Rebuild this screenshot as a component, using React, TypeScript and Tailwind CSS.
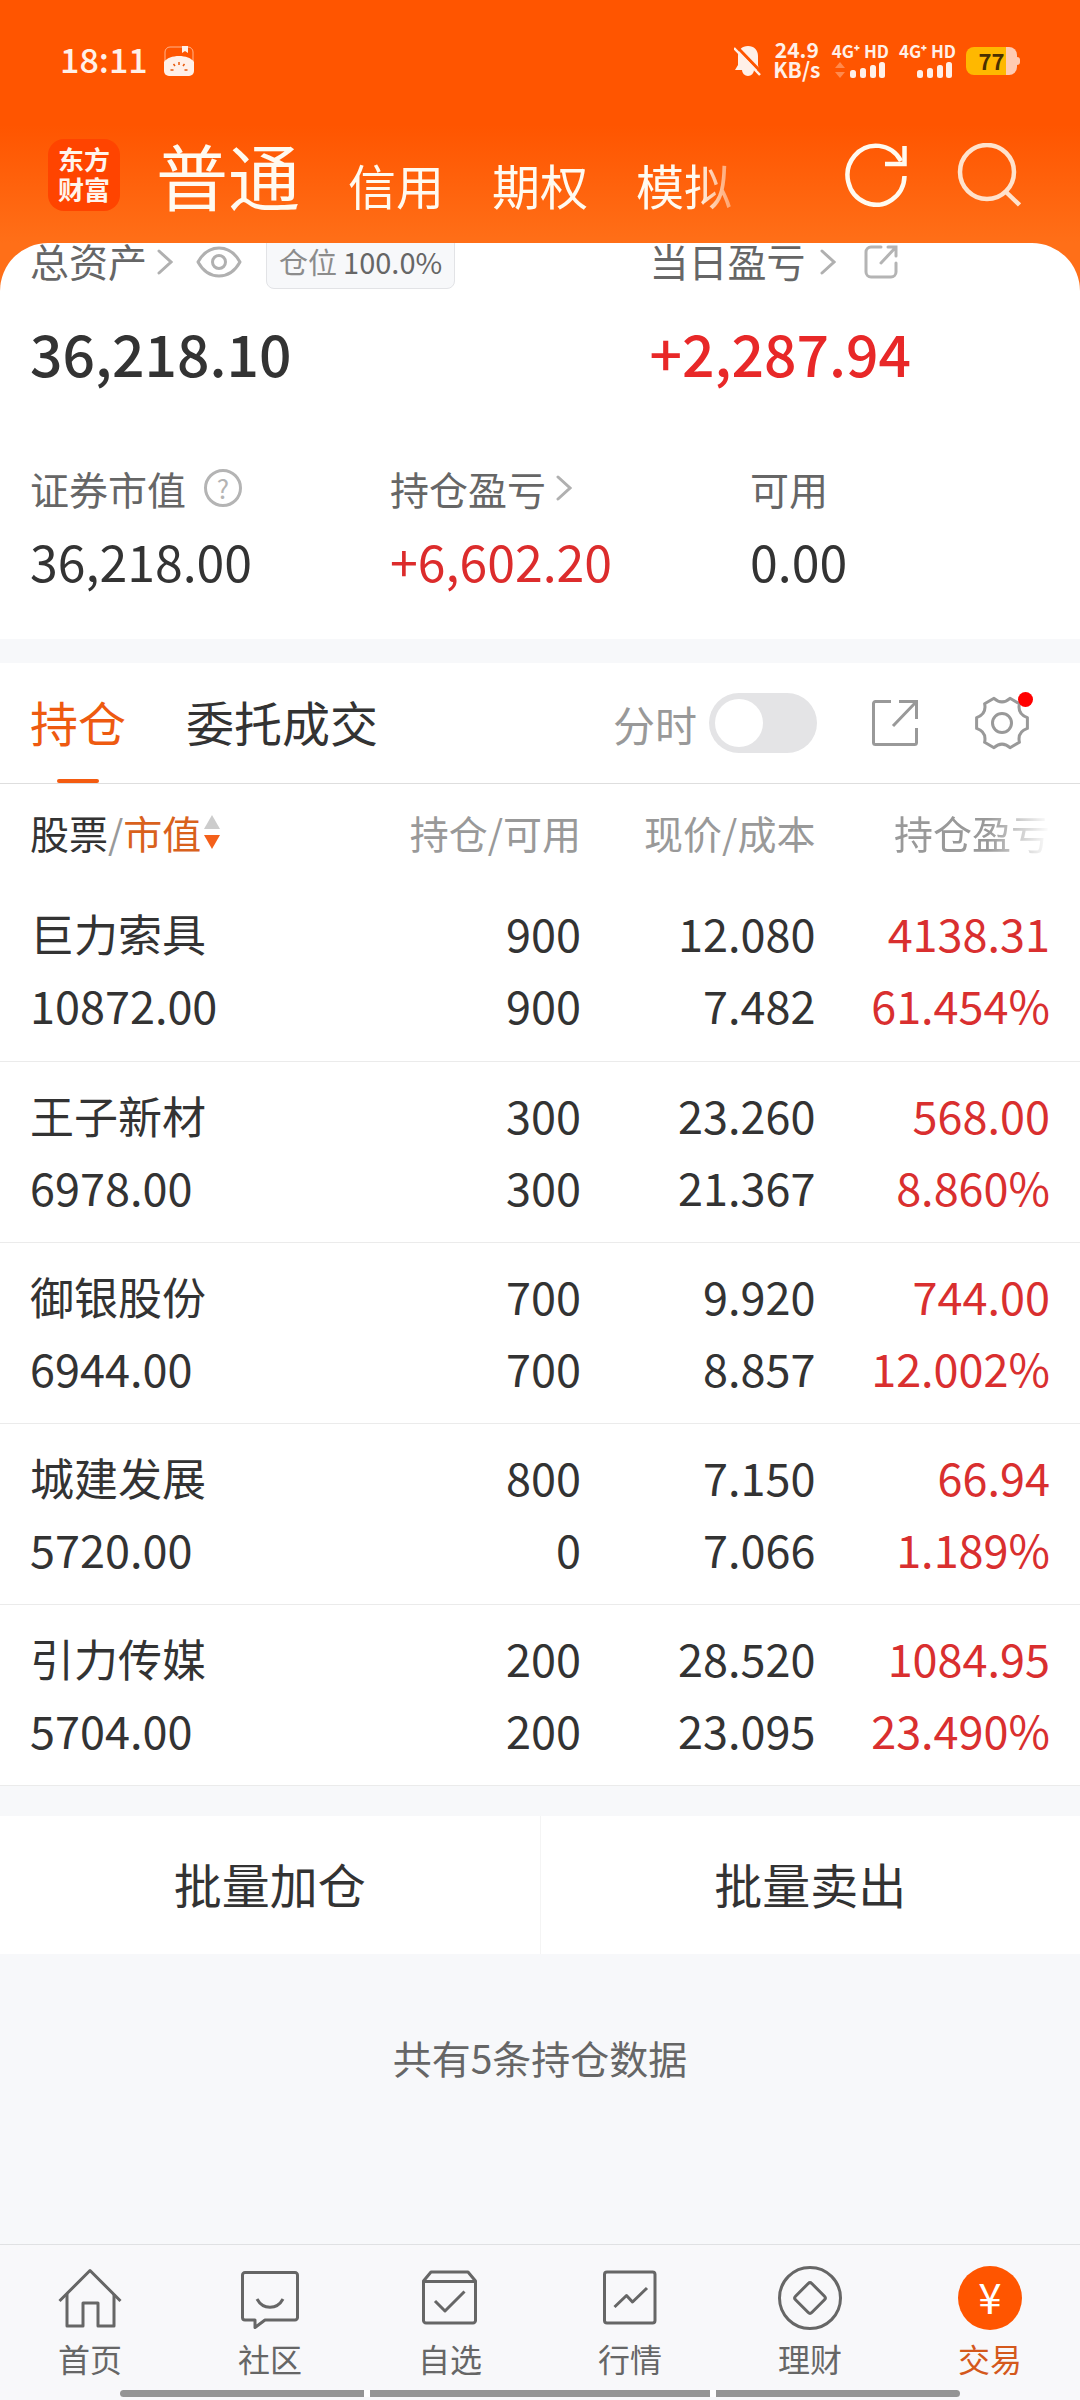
import type { ReactNode } from "react";

type Holding = {
  name: string;
  value: string;
  held: string;
  available: string;
  price: string;
  cost: string;
  profit: string;
  rate: string;
};

const HOLDINGS: Holding[] = [
  { name: "巨力索具", value: "10872.00", held: "900", available: "900", price: "12.080", cost: "7.482", profit: "4138.31", rate: "61.454%" },
  { name: "王子新材", value: "6978.00", held: "300", available: "300", price: "23.260", cost: "21.367", profit: "568.00", rate: "8.860%" },
  { name: "御银股份", value: "6944.00", held: "700", available: "700", price: "9.920", cost: "8.857", profit: "744.00", rate: "12.002%" },
  { name: "城建发展", value: "5720.00", held: "800", available: "0", price: "7.150", cost: "7.066", profit: "66.94", rate: "1.189%" },
  { name: "引力传媒", value: "5704.00", held: "200", available: "200", price: "28.520", cost: "23.095", profit: "1084.95", rate: "23.490%" },
];

function ChevronIcon() {
  return (
    <svg viewBox="0 0 16 26" className="h-[26px] w-4" fill="none" stroke="#b0b0b0" strokeWidth="3" strokeLinecap="round">
      <path d="M2 2l12 11L2 24" />
    </svg>
  );
}

function EyeIcon() {
  return (
    <svg viewBox="0 0 46 32" className="h-8 w-[46px]" fill="none" stroke="#b0b0b0" strokeWidth="3">
      <path d="M2 16C7 7 14 2 23 2s16 5 21 14c-5 9-12 14-21 14S7 25 2 16z" strokeLinejoin="round" />
      <circle cx="23" cy="16" r="6.5" />
    </svg>
  );
}

function ShareIcon() {
  return (
    <svg viewBox="0 0 34 34" className="size-[34px]" fill="none" stroke="#b4b4b4" strokeWidth="3" strokeLinecap="round">
      <path d="M17 2H7a5 5 0 0 0-5 5v20a5 5 0 0 0 5 5h20a5 5 0 0 0 5-5v-9M24 2h8v9M32 2L17 18" />
    </svg>
  );
}

function ExportIcon() {
  return (
    <svg viewBox="0 0 48 48" className="size-12" fill="none" stroke="#999" strokeWidth="3">
      <path d="M20 2.500H4.500a2 2 0 0 0-2 2v39a2 2 0 0 0 2 2h39a2 2 0 0 0 2-2V29" />
      <path d="M28 2.500h17.500V20M45.500 2.500L22 27" />
    </svg>
  );
}

function GearIcon() {
  return (
    <svg viewBox="0 0 54 54" className="size-[54px]" fill="none" stroke="#999" strokeWidth="3" strokeLinejoin="round">
      <path d="M52.400 21.600V32.400Q42.200 35.800 44.400 46.300L35 51.700Q27 44.500 19 51.700L9.600 46.300Q11.800 35.800 1.600 32.400V21.600Q11.800 18.200 9.600 7.700L19 2.300Q27 9.500 35 2.300L44.400 7.700Q42.200 18.200 52.400 21.600Z" />
      <circle cx="27" cy="27" r="9.500" />
    </svg>
  );
}

function SignalIcon({ arrows = false }: { arrows?: boolean }) {
  return (
    <svg viewBox="0 0 54 18" className="h-[18px] w-[54px]" fill="#fff0e8">
      {arrows && <path d="M8 1l5 6H3zM8 17l5-6H3z" fill="#ff8a4d" />}
      <rect x="18" y="9" width="6" height="8" rx="2.500" />
      <rect x="28" y="7" width="6" height="10" rx="2.500" />
      <rect x="38" y="4" width="6" height="13" rx="2.500" />
      <rect x="47" y="1" width="6" height="16" rx="2.500" />
    </svg>
  );
}

function StatusBar() {
  return (
    <div className="flex h-[122px] items-center justify-between pr-[60px] pl-[60px] text-[#fff0e8]">
      <div className="flex items-center gap-4">
        <span className="pb-1 text-[34px] leading-10 font-medium">18:11</span>
        <svg viewBox="0 0 30 30" className="size-[30px]">
          <rect x="1" y="1" width="28" height="28" rx="5" fill="none" stroke="#ffb48c" />
          <path d="M18 0h6v7l-3-2-3 2z" fill="#fff0e8" />
          <path d="M0 16C5 8 25 8 30 16v9a5 5 0 0 1-5 5H5a5 5 0 0 1-5-5z" fill="#fff0e8" />
          <path d="M15 16v3M9.500 18l1.500 2M20.500 18L19 20M6.500 24h3M20.500 24h3" stroke="#e8590c" strokeWidth="1.500" />
        </svg>
      </div>
      <div className="flex items-center gap-[10px]">
        <svg viewBox="0 0 28 32" className="h-8 w-7">
          <path d="M14 1C8 1 4 5 4 11v9l-3 5h7a6 6 0 0 0 12 0h5l-1-5v-9C24 5 20 1 14 1z" fill="#fff0e8" />
          <path d="M3 2l25 26" stroke="#f50" strokeWidth="3" />
          <path d="M0 3l26 27" stroke="#fff0e8" strokeWidth="2.500" />
        </svg>
        <div className="w-[50px] pb-1 text-center text-[21px] leading-5 font-bold">
          24.9
          <br />
          KB/s
        </div>
        <div className="flex flex-col gap-[2px]">
          <span className="text-[17px] leading-4 font-bold">4G⁺ HD</span>
          <SignalIcon arrows />
        </div>
        <div className="flex flex-col gap-[2px]">
          <span className="text-[17px] leading-4 font-bold">4G⁺ HD</span>
          <SignalIcon />
        </div>
        <div className="flex items-center">
          <span className="h-7 w-[51px] rounded-lg bg-[linear-gradient(to_right,#ffb800_40px,#ffcbb3_40px)] text-center text-[22px] leading-[26px] font-bold text-[#4a3000]">
            77
          </span>
          <span className="h-2 w-[3px] rounded-r bg-[#ffcbb3]" />
        </div>
      </div>
    </div>
  );
}

function AppHeader() {
  return (
    <header className="flex h-[121px] items-start pr-[59px] pl-12">
      <div className="mt-[17px] flex size-[72px] flex-col items-center justify-center rounded-2xl bg-[#ff4400] pb-[2px] text-[26px] leading-[30px] font-bold text-[#fff4ec]">
        <span>东方</span>
        <span>财富</span>
      </div>
      <nav className="mt-[2px] ml-9 flex flex-1 items-baseline gap-12 [mask-image:linear-gradient(to_right,#000_540px,transparent_600px)] text-[48px] whitespace-nowrap text-[#fffaf0]">
        <button className="text-[72px] leading-[100px]">普通</button>
        <button>信用</button>
        <button>期权</button>
        <button>模拟</button>
      </nav>
      <div className="mt-[21px] flex gap-[49px]">
        <button aria-label="刷新">
          <svg viewBox="0 0 64 64" className="size-16" fill="none" stroke="#fffaf0" strokeWidth="4.500">
            <path d="M60.500 33A28.500 29.500 0 1 1 57 18" />
            <path d="M60.500 3v18H41" />
          </svg>
        </button>
        <button aria-label="搜索">
          <svg viewBox="0 0 64 64" className="size-16" fill="none" stroke="#ffe2cc" strokeWidth="4.500">
            <circle cx="30" cy="29" r="27" />
            <path d="M48.500 48.500l14 13.500" />
          </svg>
        </button>
      </div>
    </header>
  );
}

function Stat({ label, value, icon, up = false }: { label: string; value: string; icon?: ReactNode; up?: boolean }) {
  return (
    <div className="pl-[30px]">
      <div className="flex h-11 items-center text-[39px] leading-11 text-[#666]">
        <span>{label}</span>
        {icon}
      </div>
      <div className={up ? "mt-[22px] text-[50px] leading-14 text-[#dc2c2c]" : "mt-[22px] text-[50px] leading-14 text-[#333]"}>{value}</div>
    </div>
  );
}

function AssetCard() {
  return (
    <section className="overflow-hidden rounded-t-[48px] bg-white pb-[51px] text-[#666]">
      {/* top row is scrolled slightly under the header */}
      <div className="-mt-2 flex">
        <div className="w-[57%] pl-[30px]">
          <div className="flex h-[54px] items-center text-[39px] leading-[46px]">
            <span className="pb-1">总资产</span>
            <span className="ml-[10px]">
              <ChevronIcon />
            </span>
            <button className="ml-[23px]" aria-label="隐藏金额">
              <EyeIcon />
            </button>
            <span className="ml-6 flex h-[54px] items-center gap-[6px] rounded-lg border border-[#e2e3e6] bg-[#f7f8fa] px-3 text-[29px]">
              <span className="pb-[2px] text-[#8c8c8c]">仓位</span>
              <span className="pb-[2px]">100.0%</span>
            </span>
          </div>
          <div className="mt-[31px] text-[57px] leading-16 font-medium text-[#333]">36,218.10</div>
        </div>
        <div className="pl-[34px]">
          <div className="flex h-[54px] items-center text-[39px] leading-[46px]">
            <span className="pb-1">当日盈亏</span>
            <span className="ml-[14px]">
              <ChevronIcon />
            </span>
            <button className="ml-7" aria-label="分享">
              <ShareIcon />
            </button>
          </div>
          <div className="mt-[31px] text-[57px] leading-16 font-medium text-[#e82828]">+2,287.94</div>
        </div>
      </div>
      <div className="mt-[82px] grid grid-cols-3">
        <Stat
          label="证券市值"
          value="36,218.00"
          icon={
            <button className="ml-[18px] size-[38px] rounded-full border-[3px] border-[#b4b4b4] text-[26px] leading-7 text-[#b4b4b4]">?</button>
          }
        />
        <Stat
          label="持仓盈亏"
          value="+6,602.20"
          up
          icon={
            <span className="ml-[10px]">
              <ChevronIcon />
            </span>
          }
        />
        <Stat label="可用" value="0.00" />
      </div>
    </section>
  );
}

function HoldingTabs() {
  return (
    <div className="flex h-[121px] items-stretch border-b border-[#dedede] pr-[51px] pl-[30px] text-[48px] text-[#333]">
      <button className="flex flex-col items-center text-[#ee5a10]">
        <span className="flex-1 leading-[116px]">持仓</span>
        <span className="h-[6px] w-[42px] rounded-full bg-[#f45b10]" />
      </button>
      <button className="ml-[60px] self-start leading-[116px]">委托成交</button>
      <div className="ml-auto flex items-center">
        <label htmlFor="minute" className="text-[42px] text-[#999]">
          分时
        </label>
        <input
          id="minute"
          type="checkbox"
          role="switch"
          className="ml-3 h-[60px] w-[108px] appearance-none rounded-full bg-[#e4e4e6] p-[6px] before:block before:size-12 before:rounded-full before:bg-white checked:before:ml-12"
        />
        <button className="ml-[54px]" aria-label="导出">
          <ExportIcon />
        </button>
        <button className="relative ml-14" aria-label="设置">
          <GearIcon />
          <span className="absolute -top-1 -right-1 size-[15px] rounded-full bg-[#ff0000]" />
        </button>
      </div>
    </div>
  );
}

function HoldingsTable() {
  return (
    <table className="w-full table-fixed text-right text-[45px] leading-[72px] text-[#333]">
      <thead>
        <tr className="h-24 text-[39px] text-[#999] [&>th]:font-normal">
          <th className="w-[30%] pl-[30px] text-left">
            <span className="flex items-center whitespace-nowrap">
              <span className="text-[#333]">股票</span>/
              <button className="flex items-center gap-[2px] text-[#d9611c]">
                市值
                <svg viewBox="0 0 18 36" className="h-9 w-[18px]">
                  <path d="M9 1l8 14H1z" fill="#ccc" />
                  <path d="M9 35l8-14H1z" fill="#f4601a" />
                </svg>
              </button>
            </span>
          </th>
          <th className="w-[23.800%]">持仓/可用</th>
          <th className="w-[21.700%]">现价/成本</th>
          <th className="pr-[30px]">
            <span className="[mask-image:linear-gradient(to_right,#000_60%,transparent)]">持仓盈亏</span>
          </th>
        </tr>
      </thead>
      <tbody>
        {HOLDINGS.map((row) => (
          <tr key={row.name} className="h-[181px] border-b border-[#ebebeb] [&>td]:pb-[2px]">
            <td className="pl-[30px] text-left">
              <div className="text-[44px]">{row.name}</div>
              <div>{row.value}</div>
            </td>
            <td>
              <div>{row.held}</div>
              <div>{row.available}</div>
            </td>
            <td>
              <div>{row.price}</div>
              <div>{row.cost}</div>
            </td>
            <td className="pr-[30px] text-[#d92f2f]">
              <div>{row.profit}</div>
              <div>{row.rate}</div>
            </td>
          </tr>
        ))}
      </tbody>
    </table>
  );
}

function NavItem({ label, active = false, children }: { label: string; active?: boolean; children: ReactNode }) {
  return (
    <a href="#" className={active ? "flex flex-1 flex-col items-center text-[#d4581c]" : "flex flex-1 flex-col items-center text-[#666]"}>
      {children}
      <span className="mt-2 text-[32px] leading-10">{label}</span>
    </a>
  );
}

function NavIcon({ children }: { children: ReactNode }) {
  return (
    <svg viewBox="0 0 64 64" className="size-16" fill="none" stroke="currentColor" strokeWidth="3" strokeLinejoin="round">
      {children}
    </svg>
  );
}

function BottomNav() {
  return (
    <nav className="mt-auto border-t border-[#e0e1e3] bg-[#f8f8fa] pt-[21px] pb-[3px]">
      <div className="flex">
        <NavItem label="首页">
          <NavIcon>
            <path d="M1.500 35L32 4.500 62.500 35" />
            <path d="M9 28v32h16V37h15v23h16V28" />
          </NavIcon>
        </NavItem>
        <NavItem label="社区">
          <NavIcon>
            <path d="M7 6.500h50a2.500 2.500 0 0 1 2.500 2.500v42.500a2.500 2.500 0 0 1-2.500 2.500H27l-10 7.500V54H7a2.500 2.500 0 0 1-2.500-2.500V9A2.500 2.500 0 0 1 7 6.500z" />
            <path d="M19 33c6 11 20 11 26 0" />
          </NavIcon>
        </NavItem>
        <NavItem label="自选">
          <NavIcon>
            <path d="M13 6h37l7.500 9v39.500a2.500 2.500 0 0 1-2.500 2.500H8a2.500 2.500 0 0 1-2.500-2.500V15zM5.500 15.500h52" />
            <path d="M17 35l10 10 19.500-19.500" />
          </NavIcon>
        </NavItem>
        <NavItem label="行情">
          <NavIcon>
            <rect x="6.500" y="6" width="50.500" height="51" rx="2.500" />
            <path d="M16.500 41l12-11.500 6 6.500L49 22" />
          </NavIcon>
        </NavItem>
        <NavItem label="理财">
          <NavIcon>
            <circle cx="32" cy="32" r="30.500" />
            <rect x="20.500" y="20.500" width="23" height="23" rx="2.500" transform="rotate(45 32 32)" />
          </NavIcon>
        </NavItem>
        <NavItem label="交易" active>
          <span className="size-16 rounded-full bg-[#ff5500] text-center text-[42px] leading-[60px] text-white">¥</span>
        </NavItem>
      </div>
      <div className="mx-auto mt-3 flex h-[7px] w-7/9 gap-[6px] overflow-hidden rounded-full bg-white">
        <span className="flex-5 bg-[#949494]" />
        <span className="flex-7 bg-[#949494]" />
        <span className="flex-5 bg-[#949494]" />
      </div>
    </nav>
  );
}

export default function App() {
  return (
    <div className="flex min-h-screen flex-col bg-[#f7f8fa] font-['Noto_Sans_CJK_SC',sans-serif]">
      <div className="bg-[linear-gradient(to_bottom,#ff5500_125px,#ff6f18_243px)]">
        <StatusBar />
        <AppHeader />
        <AssetCard />
      </div>
      <main className="mt-6">
        <div className="bg-white">
          <HoldingTabs />
          <HoldingsTable />
        </div>
        <div className="mt-[30px] flex h-[138px] bg-white text-[48px] text-[#333]">
          <button className="flex-1 border-r border-[#f4f4f4] pb-1">批量加仓</button>
          <button className="flex-1 pb-1">批量卖出</button>
        </div>
        <p className="pt-[78px] pb-20 text-center text-[39px] leading-[50px] text-[#666]">共有5条持仓数据</p>
      </main>
      <BottomNav />
    </div>
  );
}
